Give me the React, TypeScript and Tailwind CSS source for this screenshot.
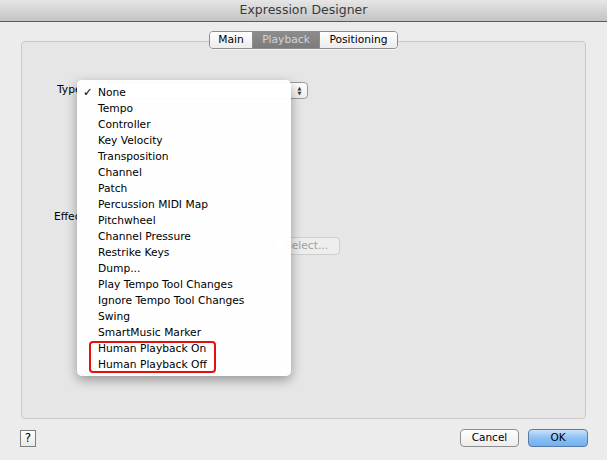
import React from "react";

const items = [
  "None",
  "Tempo",
  "Controller",
  "Key Velocity",
  "Transposition",
  "Channel",
  "Patch",
  "Percussion MIDI Map",
  "Pitchwheel",
  "Channel Pressure",
  "Restrike Keys",
  "Dump...",
  "Play Tempo Tool Changes",
  "Ignore Tempo Tool Changes",
  "Swing",
  "SmartMusic Marker",
  "Human Playback On",
  "Human Playback Off",
];

function TypeMenu() {
  return (
    <div className="absolute left-[77px] top-[80px] w-[214px] h-[296px] rounded-[5px] bg-white/95 shadow-[0_4px_12px_rgba(0,0,0,0.35)] pt-[5px] text-[10.7px] text-black">
      {items.map((label, i) => (
        <div key={label} className="h-[16px] flex items-center">
          <span className="w-[21px] pl-[6px] text-[11.5px]">{i === 0 ? "✓" : ""}</span>
          <span>{label}</span>
        </div>
      ))}
      {/* highlight around the Human Playback entries */}
      <div className="absolute left-[12px] top-[261px] w-[127px] h-[32px] border-2 border-[#e3100f] rounded-[4px]" />
    </div>
  );
}

export default function App() {
  return (
    <div
      className="relative w-[607px] h-[460px] bg-[#ececec] overflow-hidden flex flex-col"
      style={{ fontFamily: '"DejaVu Sans", "Liberation Sans", sans-serif' }}
    >
      {/* title bar */}
      <div className="h-[22px] shrink-0 flex items-center justify-center bg-gradient-to-b from-[#e6e6e6] to-[#c4c4c4] border-b border-[#5a5a5a] text-[12.5px] text-[#3a3a3a]">
        Expression Designer
      </div>

      {/* group box */}
      <div className="mx-[21px] mt-[19px] h-[378px] rounded-[4px] border border-[#c9c9c9] bg-[#e6e6e6] flex flex-col">
        <div className="-mt-[11px] flex justify-center">
          <div className="flex h-[18px] rounded-[4px] border border-[#8e8e8e] overflow-hidden text-[10.7px] shadow-[0_1px_0_rgba(255,255,255,0.6)]">
            <div className="w-[43px] flex items-center justify-center bg-gradient-to-b from-white to-[#ececec] text-black border-r border-[#8e8e8e]">
              Main
            </div>
            <div className="w-[66px] flex items-center justify-center bg-gradient-to-b from-[#8c8c8c] to-[#7c7c7c] text-[#d4d4d4]">
              Playback
            </div>
            <div className="w-[78px] flex items-center justify-center bg-gradient-to-b from-white to-[#ececec] text-black border-l border-[#8e8e8e]">
              Positioning
            </div>
          </div>
        </div>

        {/* Type row */}
        <div className="mt-[33px] flex items-center h-[17px] text-[10.7px] text-black">
          <span className="ml-[35px] w-[20px] overflow-hidden whitespace-nowrap">Type:</span>
          <div className="ml-[18px] w-[213px] h-[17px] rounded-[4px] border border-[#9a9a9a] bg-gradient-to-b from-white to-[#eeeeee] flex justify-end">
            <div className="w-[15px] flex flex-col items-center justify-center text-[5px] leading-[5px] text-[#333]">
              <span>▲</span>
              <span>▼</span>
            </div>
          </div>
        </div>

        {/* Effect row (mostly hidden behind the menu) */}
        <div className="mt-[108px] flex items-center h-[20px] text-[10.7px] text-black">
          <span className="ml-[32px] w-[23px] overflow-hidden whitespace-nowrap">Effect:</span>
          <div className="ml-[133px] w-[57px] h-[20px] border border-[#eef2fa]" />
        </div>
        <div className="mt-[10px] flex items-center h-[18px] text-[10.7px]">
          <div className="ml-[251px] w-[67px] h-[18px] rounded-[4px] border border-[#cfcfcf] bg-[#eeeeee] flex items-center justify-center text-[#a0a0a0]">
            Select...
          </div>
        </div>
      </div>

      {/* bottom buttons */}
      <div className="mt-[10px] mx-[20px] flex items-center h-[18px] text-[10.5px]">
        <div className="w-[16px] h-[17px] border border-[#7d7d7d] bg-gradient-to-b from-white to-[#e9e9e9] flex items-center justify-center text-[12px] text-black">
          ?
        </div>
        <div className="ml-auto w-[59px] h-[18px] rounded-[4px] border border-[#8f8f8f] bg-gradient-to-b from-white to-[#ececec] flex items-center justify-center text-black">
          Cancel
        </div>
        <div className="ml-[9px] mr-[-1px] w-[60px] h-[18px] rounded-[4px] border border-[#5a7aa8] bg-gradient-to-b from-[#c9e2fb] via-[#8cc0f3] to-[#6db1f2] flex items-center justify-center text-black">
          OK
        </div>
      </div>

      <TypeMenu />
    </div>
  );
}
